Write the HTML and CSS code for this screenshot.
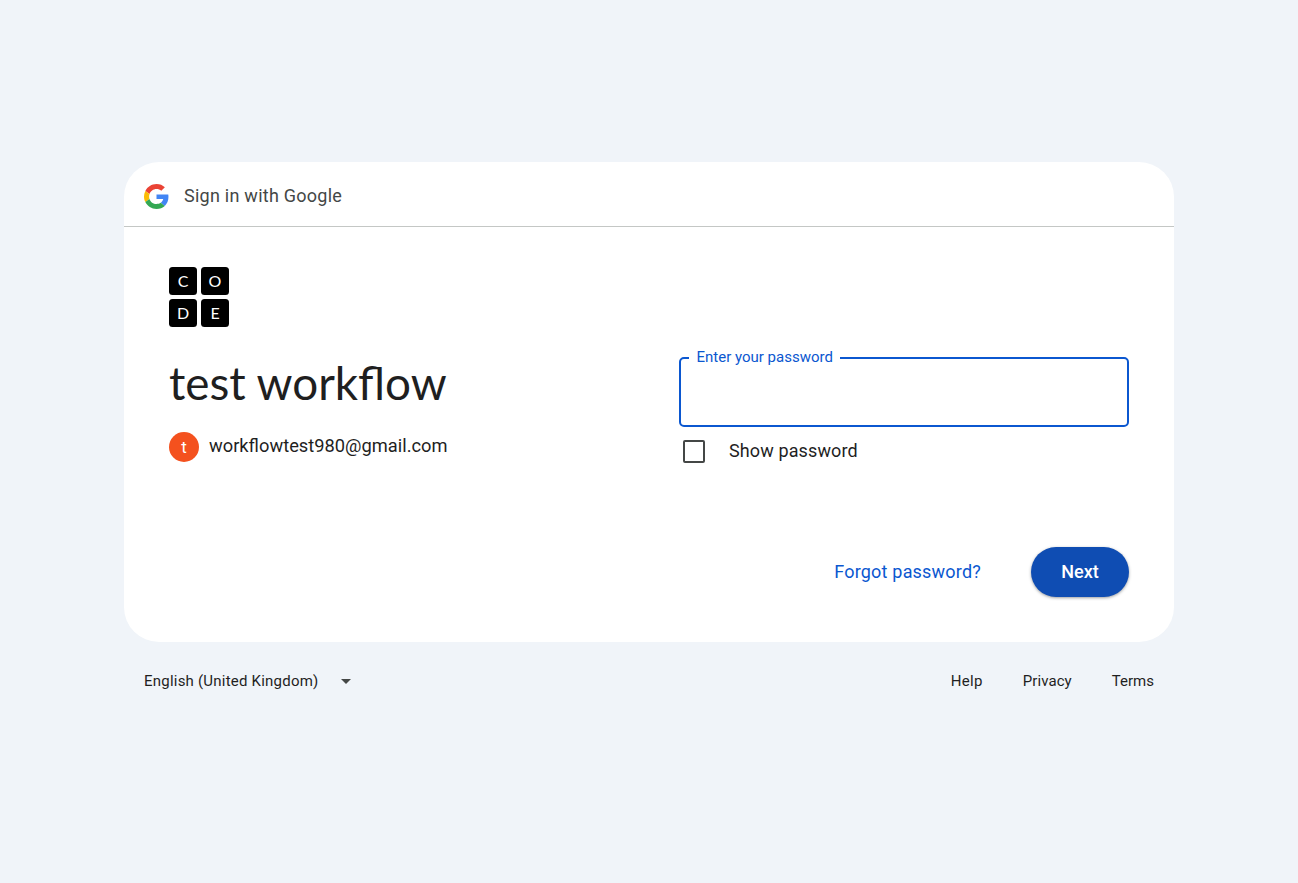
FILE: index.html
```html
<!DOCTYPE html>
<html lang="en-GB">
<head>
<meta charset="utf-8">
<title>Sign in</title>
<link rel="stylesheet" href="styles.css">
</head>
<body>
<main class="card">
  <header class="card-header">
    <svg class="google-logo" viewBox="0 0 48 48" aria-hidden="true">
      <path fill="#EA4335" d="M24 9.5c3.54 0 6.71 1.22 9.21 3.6l6.85-6.85C35.9 2.38 30.47 0 24 0 14.62 0 6.51 5.38 2.56 13.22l7.98 6.19C12.43 13.72 17.74 9.5 24 9.5z"/>
      <path fill="#4285F4" d="M46.98 24.55c0-1.57-.15-3.09-.38-4.55H24v9.02h12.94c-.58 2.96-2.26 5.48-4.78 7.18l7.73 6c4.51-4.18 7.09-10.36 7.09-17.65z"/>
      <path fill="#FBBC05" d="M10.53 28.59c-.48-1.45-.76-2.99-.76-4.59s.27-3.14.76-4.59l-7.98-6.19C.92 16.46 0 20.12 0 24c0 3.88.92 7.54 2.56 10.78l7.97-6.19z"/>
      <path fill="#34A853" d="M24 48c6.48 0 11.93-2.13 15.89-5.81l-7.73-6c-2.15 1.45-4.92 2.3-8.16 2.3-6.26 0-11.57-4.22-13.47-9.91l-7.98 6.19C6.51 42.62 14.62 48 24 48z"/>
    </svg>
    <span class="header-title">Sign in with Google</span>
  </header>
  <div class="card-body">
    <section class="intro">
      <div class="code-logo"><span>C</span><span>O</span><span>D</span><span>E</span></div>
      <h1 class="app-name">test workflow</h1>
      <div class="account"><span class="avatar">t</span><span class="email">workflowtest980@gmail.com</span></div>
    </section>
    <form class="login">
      <fieldset class="field">
        <legend><span class="field-label">Enter your password</span></legend>
      </fieldset>
      <div class="show-row"><span class="checkbox"></span><span class="show-label">Show password</span></div>
      <div class="actions"><span class="forgot">Forgot password?</span><span class="next"><span class="next-label">Next</span></span></div>
    </form>
  </div>
</main>
<footer class="footer">
  <div class="language"><span class="lang-label">English (United Kingdom)</span><svg class="caret" viewBox="0 0 10 5" aria-hidden="true"><path d="M0 0h10L5 5z" fill="#444746"/></svg></div>
  <nav class="links"><span class="help">Help</span><span class="privacy">Privacy</span><span class="terms">Terms</span></nav>
</footer>
</body>
</html>
```
FILE: styles.css
```css
* { box-sizing: border-box; }
body {
  margin: 0;
  padding: 162px 124px 0;
  min-height: 883px;
  background: #f0f4f9;
  color: #1f1f1f;
  font-family: Roboto, "Liberation Sans", sans-serif;
}
.card { height: 480px; border-radius: 35px; background: #fff; }
.card-header {
  height: 65px;
  padding: 3px 20px 0;
  display: flex;
  align-items: center;
  gap: 15px;
  border-bottom: 1px solid #c4c7c5;
}
.google-logo { width: 25px; height: 25px; margin-top: 1px; }
.header-title { font-size: 18px; line-height: 24px; color: #444746; letter-spacing: 0.25px; }
.card-body { display: flex; padding: 40px 45px 0; }
.intro { width: 510px; }
.code-logo {
  width: 60px;
  height: 60px;
  display: grid;
  grid-template-columns: 28px 28px;
  grid-template-rows: 28px 28px;
  gap: 4px;
}
.code-logo span {
  border-radius: 3.5px;
  background: #000;
  color: #fff;
  font: 400 16px/27px Lato, sans-serif;
  text-align: center;
}
.app-name { margin: 28px 0 0; font: 400 45.8px/55px Lato, sans-serif; white-space: nowrap; }
.account { display: flex; align-items: center; gap: 10px; height: 30px; margin-top: 22px; }
.avatar {
  width: 30px;
  height: 30px;
  border-radius: 50%;
  background: #f4511e;
  color: #fff;
  font-size: 17px;
  line-height: 30px;
  text-align: center;
}
.email { font: 400 18.3px/28px Roboto, sans-serif; padding-bottom: 2px; }
.login { width: 450px; padding-top: 82px; }
.field {
  height: 78px;
  margin: 0;
  padding: 0 8px;
  border: 2px solid #0b57d0;
  border-radius: 5px;
}
.field legend { height: 18px; padding: 0 7.5px; }
.field-label { display: block; font-size: 15px; line-height: 16px; color: #0b57d0; white-space: nowrap; }
.show-row { display: flex; align-items: center; height: 24px; margin-top: 12px; padding-left: 4px; }
.checkbox { width: 22px; height: 23px; border: 2px solid #444746; border-radius: 2px; }
.show-label { margin-left: 24px; font-size: 18px; line-height: 24px; letter-spacing: 0.12px; }
.actions { display: flex; justify-content: flex-end; align-items: center; gap: 50px; margin-top: 84px; }
.forgot { color: #0b57d0; font-size: 18px; line-height: 24px; letter-spacing: 0.2px; }
.next {
  width: 98px;
  height: 50px;
  border-radius: 25px;
  background: #0f4db3;
  color: #fff;
  text-align: center;
  font-size: 18px;
  font-weight: 500;
  line-height: 50px;
  box-shadow: 0 1px 3px rgba(60, 64, 67, 0.5);
}
.footer { display: flex; justify-content: space-between; padding: 29px 20px 0; font-size: 15px; line-height: 20px; }
.language { display: flex; align-items: center; gap: 22px; }
.lang-label { letter-spacing: 0.22px; }
.caret { width: 10px; height: 5px; }
.links { display: flex; gap: 40px; }
.help { letter-spacing: 0.3px; }
.privacy { letter-spacing: 0.1px; }
```
